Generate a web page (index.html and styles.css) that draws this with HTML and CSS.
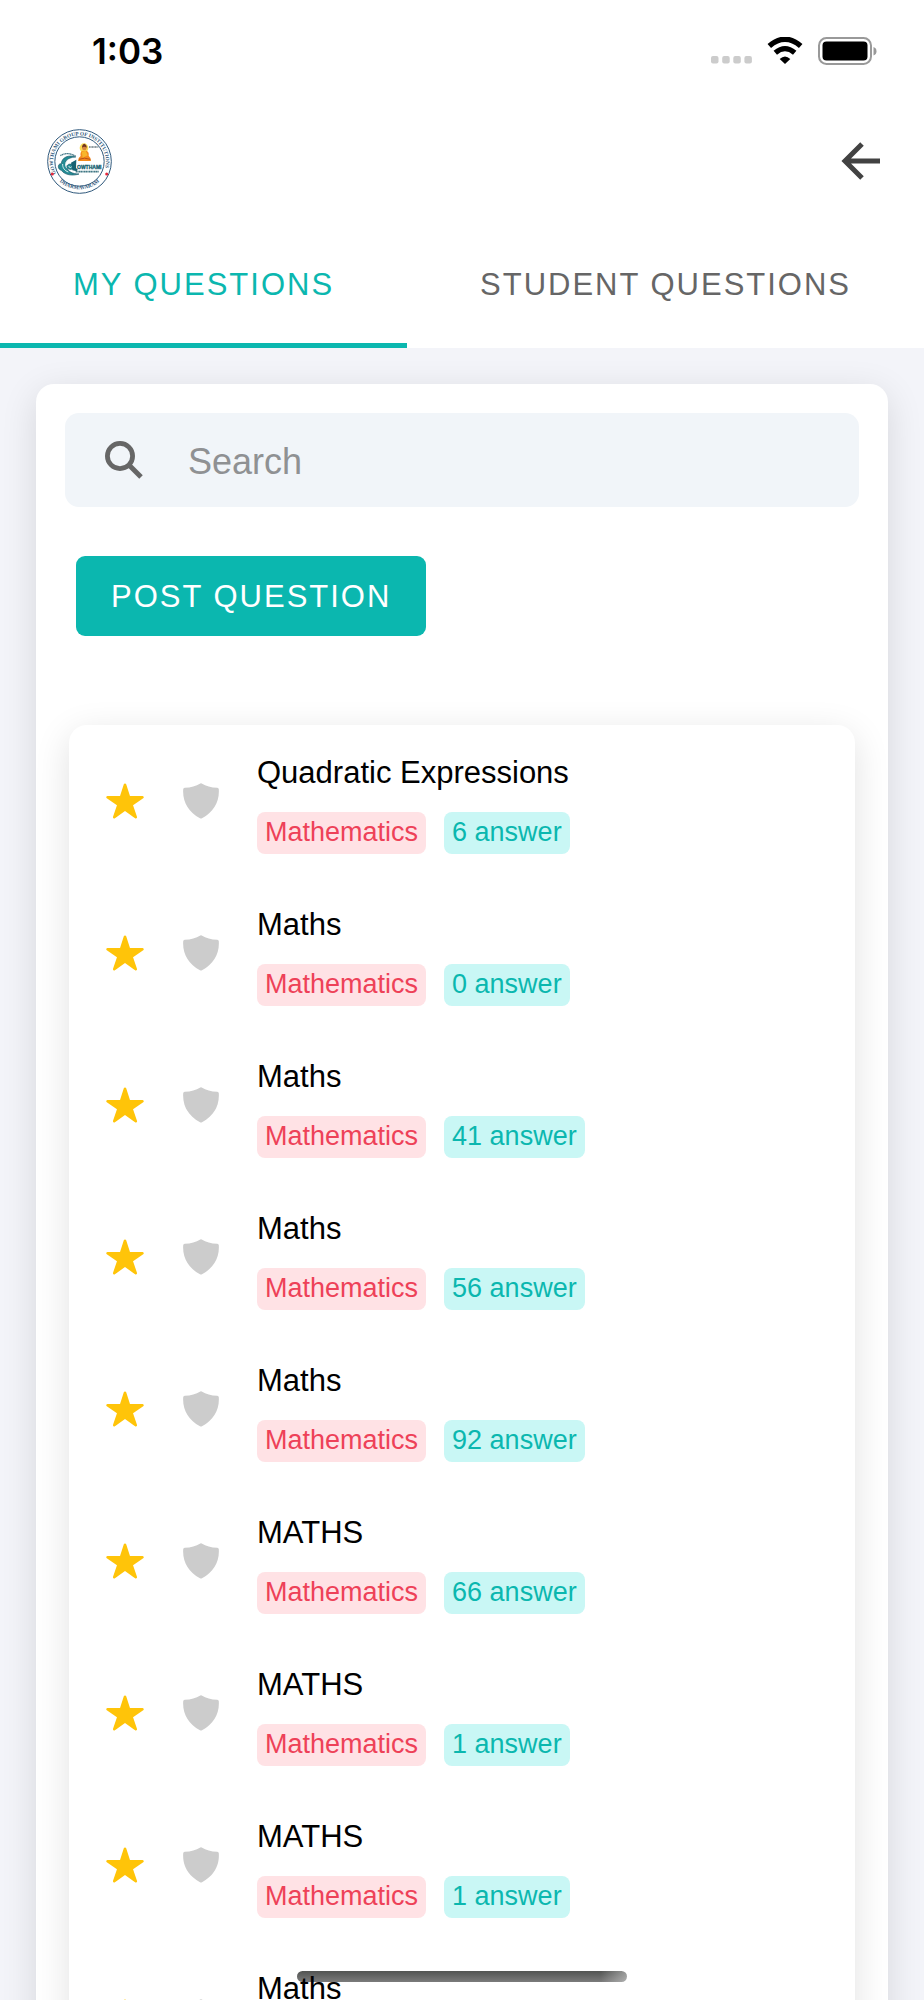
FILE: index.html
```html
<!DOCTYPE html>
<html lang="en">
<head>
<meta charset="utf-8">
<meta name="viewport" content="width=device-width, initial-scale=1">
<title>My Questions</title>
<link rel="stylesheet" href="styles.css">
</head>
<body>
<svg class="sprite" aria-hidden="true">
  <symbol id="star" viewBox="0 0 512 512"><path d="M394 480a16 16 0 01-9.390-3L256 383.760 127.390 477a16 16 0 01-24.550-18.080L153 310.350 23 221.200a16 16 0 019-29.200h160.380l48.400-148.950a16 16 0 0130.440 0l48.400 149H480a16 16 0 019.050 29.200L359 310.350l50.130 148.530A16 16 0 01394 480z"/></symbol>
  <symbol id="shield" viewBox="0 0 36 36"><path d="M17.300.4Q18-.1 18.700.4C23 3 28 4.400 34.300 4.800Q35.700 4.900 35.800 6.200C36.600 19 30.500 29 19 35.200Q18 35.800 17 35.200C5.500 29-.6 19 .2 6.200Q.3 4.900 1.700 4.800C8 4.400 13 3 17.300.4z"/></symbol>
</svg>
<div class="app">
  <div class="status">
    <span class="time">1:03</span>
    <div class="status-icons">
      <svg class="dots" viewBox="0 0 41 28"><g fill="#ccc"><rect x="0" y="19" width="7.500" height="7.500" rx="2"/><rect x="11.200" y="19" width="7.500" height="7.500" rx="2"/><rect x="22.300" y="19" width="7.500" height="7.500" rx="2"/><rect x="33.400" y="19" width="7.500" height="7.500" rx="2"/></g></svg>
      <svg class="wifi" viewBox="0 0 36 28"><path d="M2.300 9Q18-4.400 33.700 9" fill="none" stroke="#000" stroke-width="5.400"/><path d="M8.300 15.800Q18 7.400 27.700 15.800" fill="none" stroke="#000" stroke-width="5.200"/><path d="M12.700 22Q18 17 23.300 22L18 27z"/></svg>
      <svg class="battery" viewBox="0 0 59 28"><rect x="1" y="1" width="52" height="26" rx="7.500" fill="none" stroke="#999" stroke-width="2"/><rect x="4.500" y="4.500" width="45" height="19" rx="4"/><path d="M55.500 10Q58.500 11 58.500 14.200T55.500 18.500z" fill="#999"/></svg>
    </div>
  </div>
  <header class="header">
    <svg class="logo" viewBox="0 0 195 195" role="img" aria-label="Gowthami">
      <defs>
        <path id="ring-top" d="M30.500 140A79 79 0 11164.500 140"/>
        <path id="ring-bottom" d="M33 153A89 89 0 00162 153"/>
      </defs>
      <circle cx="97.500" cy="97.500" r="95.500" fill="#fff" stroke="#30597c" stroke-width="3"/>
      <circle cx="97.500" cy="97.500" r="74" fill="none" stroke="#30597c" stroke-width="3"/>
      <g class="ring-text">
        <text><textPath href="#ring-top" startOffset="2%">GOWTHAMI GROUP OF INSTITUTIONS</textPath></text>
        <text text-anchor="middle"><textPath href="#ring-bottom" startOffset="50%">DHARMAVARAM</textPath></text>
      </g>
      <circle cx="16" cy="135" r="4.500" fill="#e5273b"/><circle cx="179" cy="135" r="4.500" fill="#e5273b"/>
      <ellipse cx="111" cy="57" rx="13" ry="14" fill="#f9dc55"/>
      <path d="M93 96Q93 86 101 81Q98 68 107 65L118 65Q127 68 125 80Q133 87 132 96z" fill="#f48a1d"/>
      <path d="M104 68L116 65 122 79 107 86z" fill="#f7b62c"/>
      <circle cx="112" cy="57" r="7" fill="#d9873f"/>
      <path d="M105 56Q105 46 112 44Q120 47 119 56Q112 51 105 56z" fill="#73351f"/>
      <path d="M96 91Q112 84 130 91" fill="none" stroke="#b94e18" stroke-width="3"/>
      <path d="M86 84C65 76 44 85 43 104C31 103 31 121 43 124C54 139 78 141 96 135C77 135 64 128 61 118C78 128 84 112 73 106C62 103 58 111 61 118C47 102 58 85 86 84z" fill="#248b94" stroke="#1b5969" stroke-width="2"/>
      <path d="M47 105C46 116 53 125 64 129M65 91C54 99 53 110 60 118M65 111L70 117L76 111" fill="none" stroke="#d9eef0" stroke-width="3"/>
      <path d="M40 80Q63 66 87 83" fill="none" stroke="#477989" stroke-width="4" stroke-dasharray="4 1"/>
      <path d="M72 101L88 92 87 118 92 120 90 127 76 124z" fill="#176272"/>
      <text class="logo-name" x="90" y="119">OWTHAMI</text>
      <path d="M86 128H156" stroke="#417885" stroke-width="5" stroke-dasharray="4 1 3 1 5 1"/>
      <path d="M126 54H154" stroke="#6f7c83" stroke-width="4" stroke-dasharray="4 1 3 1"/>
    </svg>
    <button class="back" aria-label="Back"><svg viewBox="0 0 40 38"><path d="M39 19H4M21 2L4 19 21 36" fill="none" stroke="#424242" stroke-width="5"/></svg></button>
  </header>
  <nav class="tabs">
    <button class="tab active">MY QUESTIONS</button>
    <button class="tab">STUDENT QUESTIONS</button>
  </nav>
  <main class="content">
    <section class="card">
      <label class="search">
        <svg viewBox="0 0 39 39" aria-hidden="true"><circle cx="15" cy="15" r="12.600" fill="none" stroke="#666" stroke-width="4.800"/><path d="M24 24L36 36" stroke="#666" stroke-width="5"/></svg>
        <input type="search" placeholder="Search" aria-label="Search">
      </label>
      <button class="post">POST QUESTION</button>
      <ul class="list">
        <li class="row"><svg class="star"><use href="#star"/></svg><svg class="shield"><use href="#shield"/></svg><div class="info"><h2>Quadratic Expressions</h2><div class="tags"><span class="tag subject">Mathematics</span><span class="tag answers">6 answer</span></div></div></li>
        <li class="row"><svg class="star"><use href="#star"/></svg><svg class="shield"><use href="#shield"/></svg><div class="info"><h2>Maths</h2><div class="tags"><span class="tag subject">Mathematics</span><span class="tag answers">0 answer</span></div></div></li>
        <li class="row"><svg class="star"><use href="#star"/></svg><svg class="shield"><use href="#shield"/></svg><div class="info"><h2>Maths</h2><div class="tags"><span class="tag subject">Mathematics</span><span class="tag answers">41 answer</span></div></div></li>
        <li class="row"><svg class="star"><use href="#star"/></svg><svg class="shield"><use href="#shield"/></svg><div class="info"><h2>Maths</h2><div class="tags"><span class="tag subject">Mathematics</span><span class="tag answers">56 answer</span></div></div></li>
        <li class="row"><svg class="star"><use href="#star"/></svg><svg class="shield"><use href="#shield"/></svg><div class="info"><h2>Maths</h2><div class="tags"><span class="tag subject">Mathematics</span><span class="tag answers">92 answer</span></div></div></li>
        <li class="row"><svg class="star"><use href="#star"/></svg><svg class="shield"><use href="#shield"/></svg><div class="info"><h2>MATHS</h2><div class="tags"><span class="tag subject">Mathematics</span><span class="tag answers">66 answer</span></div></div></li>
        <li class="row"><svg class="star"><use href="#star"/></svg><svg class="shield"><use href="#shield"/></svg><div class="info"><h2>MATHS</h2><div class="tags"><span class="tag subject">Mathematics</span><span class="tag answers">1 answer</span></div></div></li>
        <li class="row"><svg class="star"><use href="#star"/></svg><svg class="shield"><use href="#shield"/></svg><div class="info"><h2>MATHS</h2><div class="tags"><span class="tag subject">Mathematics</span><span class="tag answers">1 answer</span></div></div></li>
        <li class="row"><svg class="star"><use href="#star"/></svg><svg class="shield"><use href="#shield"/></svg><div class="info"><h2>Maths</h2></div></li>
      </ul>
    </section>
  </main>
  <div class="home-indicator"></div>
</div>
</body>
</html>
```
FILE: styles.css
```css
* { box-sizing: border-box; }
body {
  margin: 0;
  background: #fff;
  color: #000;
  font-family: "Liberation Sans", Arial, sans-serif;
}
button, input { font: inherit; border: 0; padding: 0; background: none; }
svg { display: block; flex: none; }
.sprite { position: absolute; width: 0; height: 0; }
.app { display: flex; flex-direction: column; height: 100vh; overflow: hidden; }

.status {
  flex: none;
  display: flex;
  justify-content: space-between;
  align-items: center;
  height: 101px;
  padding: 0 47px 0 92px;
}
.time { font: 600 35px/40px Inter, sans-serif; }
.status-icons { display: flex; gap: 15px; }
.dots { width: 41px; height: 28px; }
.wifi { width: 36px; height: 28px; }
.battery { width: 59px; height: 28px; }

.header {
  flex: none;
  display: flex;
  justify-content: space-between;
  align-items: center;
  height: 120px;
  padding: 0 43px 0 47px;
}
.logo { width: 65px; height: 65px; }
.ring-text { font: 700 16px "Liberation Serif", serif; fill: #30597c; }
.logo-name { font: 700 15px "Liberation Sans", sans-serif; fill: #176272; stroke: #176272; }
.back svg { width: 40px; height: 38px; }

.tabs { flex: none; display: flex; height: 127px; }
.tab {
  flex: 1 1 auto;
  padding: 5px 32px 0;
  border-bottom: 5px solid transparent;
  color: #666;
  font-size: 31px;
  letter-spacing: 2px;
}
.tab.active { color: #0bb7af; border-color: #0bb7af; }

.content {
  flex: 1;
  min-height: 0;
  padding: 36px;
  overflow-y: auto;
  scrollbar-width: none;
  background: #f3f4f9;
}
.card {
  padding: 29px;
  background: #fff;
  border-radius: 18px;
  box-shadow: 0 9px 36px rgba(0, 0, 0, .12);
}
.search {
  display: flex;
  align-items: center;
  gap: 44px;
  height: 94px;
  padding: 0 40px;
  background: #f1f5f9;
  border-radius: 14px;
}
.search svg { width: 39px; height: 39px; }
.search input { flex: 1; min-width: 0; padding-top: 3px; font-size: 36px; outline: none; }
.search input::placeholder { color: #8f9193; opacity: 1; }
.post {
  margin: 49px 11px 0;
  height: 80px;
  padding: 2px 35px 0;
  border-radius: 9px;
  background: #0bb7af;
  color: #fff;
  font-size: 31px;
  letter-spacing: 2px;
}
.list {
  margin: 89px 4px 0;
  padding: 0;
  list-style: none;
  border-radius: 18px;
  box-shadow: 0 9px 36px rgba(0, 0, 0, .12);
}
.row {
  display: flex;
  align-items: center;
  min-height: 152px;
  padding: 0 36px;
}
.star { width: 40px; height: 40px; margin-right: 38px; fill: #ffc409; }
.shield { width: 36px; height: 36px; margin-right: 38px; fill: #ccc; }
.info { align-self: flex-start; padding: 28px 0 23px; }
.info h2 { margin: 0 0 19px; font-size: 31px; font-weight: 400; line-height: 40px; }
.tags { display: flex; gap: 18px; }
.tag {
  padding: 0 8px 2px;
  border-radius: 8px;
  font-size: 27px;
  line-height: 40px;
  white-space: nowrap;
}
.subject { background: #ffe2e5; color: #ee4158; }
.answers { background: #c9f7f5; color: #0bb7af; }

.home-indicator {
  position: fixed;
  bottom: 18px;
  left: 50%;
  width: 330px;
  height: 11px;
  margin-left: -165px;
  border-radius: 6px;
  background: linear-gradient(90deg, transparent 92%, rgba(255, 255, 255, .4)), linear-gradient(#525452, #7b7b7b);
  mix-blend-mode: multiply;
}
```
